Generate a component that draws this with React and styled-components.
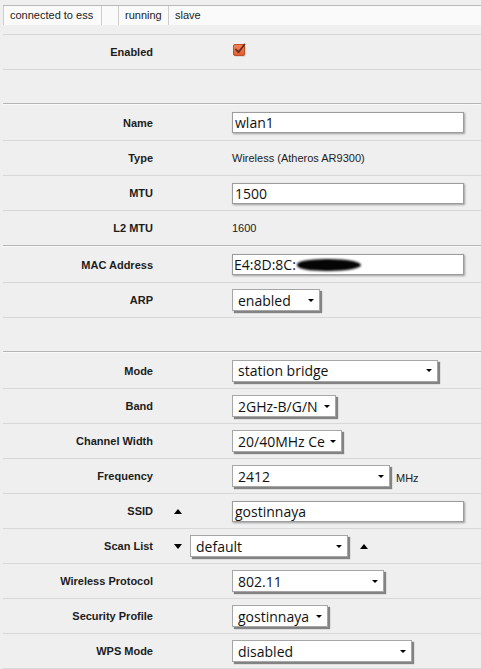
import React from "react";
import styled, { createGlobalStyle } from "styled-components";

const GlobalStyle = createGlobalStyle`
  *, *::before, *::after {
    box-sizing: border-box;
  }
  html, body {
    margin: 0;
    background: #efefef;
  }
  body {
    font-family: "Liberation Sans", Arial, sans-serif;
    color: #222;
  }
`;

const Page = styled.div`
  padding: 5px 0 0 3px;
  width: 481px;
  height: 669px;
  overflow: hidden;
`;

const StatusBar = styled.div`
  display: flex;
  height: 20px;
  border-top: 1px solid #b9b9b9;
  background: #fafafa;
  margin-bottom: 9px;
`;

const StatusCell = styled.div`
  width: ${(p) => (p.$w ? `${p.$w}px` : "auto")};
  flex: ${(p) => (p.$w ? "none" : "1")};
  border-left: 1px solid #cdcdcd;
  padding-left: 6px;
  font-size: 11px;
  line-height: 19px;
  color: #222;
  white-space: nowrap;
`;

const Row = styled.div`
  display: grid;
  grid-template-columns: 150px 79px 1fr;
  align-items: center;
  height: ${(p) => (p.$spacer ? 34 : 35)}px;
  border-top: 1px solid #d8d8d8;
`;

const Section = styled.div`
  border-top: ${(p) => (p.$plain ? "none" : "1px solid #b5b5b5")};

  ${(p) =>
    !p.$plain &&
    `
    & > ${Row}:first-child {
      border-top-color: #f9f9f9;
      height: 36px;
    }
  `}
`;

const Label = styled.div`
  font-size: 11px;
  font-weight: bold;
  text-align: right;
  color: #1c1c1c;
  white-space: nowrap;
`;

const Gutter = styled.div`
  display: flex;
  align-items: center;
  padding-left: 21px;
`;

const Value = styled.div`
  display: flex;
  align-items: center;
  grid-column: ${(p) => (p.$span ? "2 / 4" : "3")};
  padding-left: ${(p) => (p.$span ? 21 : 0)}px;
  gap: ${(p) => (p.$span ? 8 : 0)}px;
`;

const PlainText = styled.span`
  font-size: 11px;
  color: #222;
`;

const TextBox = styled.div`
  width: 232px;
  height: 21px;
  background: #fff;
  border: 1px solid #9c9c9c;
  box-shadow: 1px 1px 2px rgba(0, 0, 0, 0.35);
  padding: 0 ${(p) => (p.$tight ? 1 : 2)}px;
  display: flex;
  align-items: center;
  font-family: "Open Sans", "DejaVu Sans", sans-serif;
  font-size: 14px;
  color: #111;
  white-space: nowrap;
  overflow: hidden;
`;

const Redacted = styled.span`
  display: inline-block;
  width: 64px;
  height: 12px;
  margin-left: 1px;
  background: #050505;
  border-radius: 45% 50% 50% 45%;
  filter: blur(0.8px);
`;

const SelectBox = styled.div`
  width: ${(p) => p.$w}px;
  height: 22px;
  background: #fff;
  border: 1px solid #a6a6a6;
  box-shadow: 2px 2px 1px rgba(0, 0, 0, 0.45);
  display: flex;
  align-items: center;
  padding-left: 5px;
  font-family: "Open Sans", "DejaVu Sans", sans-serif;
  font-size: 14px;
  color: #111;
`;

const SelectText = styled.span`
  flex: 1;
  overflow: hidden;
  white-space: nowrap;
`;

const Caret = styled.span`
  flex: none;
  width: 0;
  height: 0;
  border-left: 3px solid transparent;
  border-right: 3px solid transparent;
  border-top: 3px solid #000;
  margin: 0 5px 0 3px;
`;

const Toggle = styled.span`
  width: 0;
  height: 0;
  border-left: 4.5px solid transparent;
  border-right: 4.5px solid transparent;
  ${(p) =>
    p.$down ? "border-top: 5px solid #000;" : "border-bottom: 5px solid #000;"}
  margin-left: ${(p) => p.$offset || 0}px;
`;

const Unit = styled.span`
  font-size: 11px;
  margin: 4px 0 0 6px;
  color: #222;
`;

const CheckWrap = styled.span`
  display: inline-flex;
  margin: -4px 0 0 1px;
`;

function Checkbox() {
  return (
    <CheckWrap>
      <svg width="15" height="14" viewBox="0 0 15 14">
        <defs>
          <linearGradient id="cbfill" x1="0" y1="0" x2="0" y2="1">
            <stop offset="0" stopColor="#f4865a" />
            <stop offset="1" stopColor="#e15a30" />
          </linearGradient>
        </defs>
        <rect x="1.5" y="2.5" width="11" height="11" rx="1.5" fill="#000" opacity="0.18" />
        <rect x="0.5" y="1.5" width="11" height="11" rx="1.5" fill="url(#cbfill)" stroke="#c04e28" />
        <path d="M3 6.5 L5.5 9.2 L11.5 1.5" fill="none" stroke="#5c2e1e" strokeWidth="1.8" strokeLinecap="round" strokeLinejoin="round" />
      </svg>
    </CheckWrap>
  );
}

function Select({ w, children }) {
  return (
    <SelectBox $w={w}>
      <SelectText>{children}</SelectText>
      <Caret />
    </SelectBox>
  );
}

function Field({ label, children, gutter }) {
  return (
    <Row>
      <Label>{label}</Label>
      <Gutter>{gutter}</Gutter>
      <Value>{children}</Value>
    </Row>
  );
}

export default function App() {
  return (
    <Page>
      <GlobalStyle />
      <StatusBar>
        <StatusCell $w={98}>connected to ess</StatusCell>
        <StatusCell $w={17} />
        <StatusCell $w={50}>running</StatusCell>
        <StatusCell>slave</StatusCell>
      </StatusBar>

      <Section $plain>
        <Field label="Enabled">
          <Checkbox />
        </Field>
        <Row $spacer />
      </Section>

      <Section>
        <Field label="Name">
          <TextBox>wlan1</TextBox>
        </Field>
        <Field label="Type">
          <PlainText>Wireless (Atheros AR9300)</PlainText>
        </Field>
        <Field label="MTU">
          <TextBox>1500</TextBox>
        </Field>
        <Field label="L2 MTU">
          <PlainText>1600</PlainText>
        </Field>
      </Section>

      <Section>
        <Field label="MAC Address">
          <TextBox $tight>
            E4:8D:8C:
            <Redacted />
          </TextBox>
        </Field>
        <Field label="ARP">
          <Select w={88}>enabled</Select>
        </Field>
        <Row $spacer />
      </Section>

      <Section>
        <Field label="Mode">
          <Select w={206}>station bridge</Select>
        </Field>
        <Field label="Band">
          <Select w={104}>2GHz-B/G/N</Select>
        </Field>
        <Field label="Channel Width">
          <Select w={110}>20/40MHz Ce</Select>
        </Field>
        <Field label="Frequency">
          <Select w={158}>2412</Select>
          <Unit>MHz</Unit>
        </Field>
        <Field label="SSID" gutter={<Toggle />}>
          <TextBox>gostinnaya</TextBox>
        </Field>
        <Row>
          <Label>Scan List</Label>
          <Value $span>
            <Toggle $down />
            <Select w={158}>default</Select>
            <Toggle $offset={4} />
          </Value>
        </Row>
        <Field label="Wireless Protocol">
          <Select w={152}>802.11</Select>
        </Field>
        <Field label="Security Profile">
          <Select w={96}>gostinnaya</Select>
        </Field>
        <Field label="WPS Mode">
          <Select w={180}>disabled</Select>
        </Field>
        <Row $spacer />
      </Section>
    </Page>
  );
}
